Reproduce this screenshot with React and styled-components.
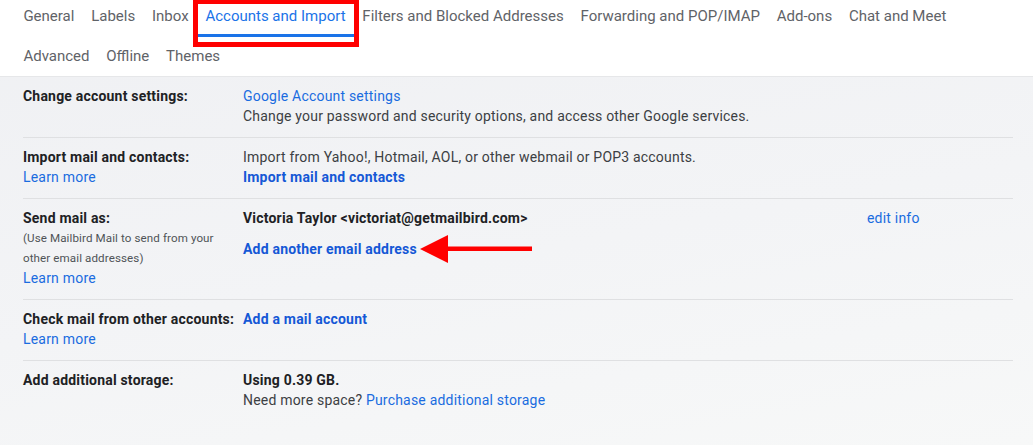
import React from "react";
import styled, { createGlobalStyle } from "styled-components";

const tabs = [
  "General",
  "Labels",
  "Inbox",
  "Accounts and Import",
  "Filters and Blocked Addresses",
  "Forwarding and POP/IMAP",
  "Add-ons",
  "Chat and Meet",
  "Advanced",
  "Offline",
  "Themes",
];

function App() {
  return (
    <>
      <GlobalStyle />
      <Page>
        <TabBar>
          {tabs.map((tab) => (
            <Tab key={tab} $active={tab === "Accounts and Import"}>
              {tab}
              {tab === "Accounts and Import" && <Highlight />}
            </Tab>
          ))}
        </TabBar>

        <Settings>
          <Row>
            <Label>
              <LabelTitle>Change account settings:</LabelTitle>
            </Label>
            <Value>
              <Link>Google Account settings</Link>
              <Text>
                Change your password and security options, and access other
                Google services.
              </Text>
            </Value>
            <Action />
          </Row>

          <Row>
            <Label>
              <LabelTitle>Import mail and contacts:</LabelTitle>
              <Link>Learn more</Link>
            </Label>
            <Value>
              <Text>
                Import from Yahoo!, Hotmail, AOL, or other webmail or POP3
                accounts.
              </Text>
              <Link $bold>Import mail and contacts</Link>
            </Value>
            <Action />
          </Row>

          <Row>
            <Label>
              <LabelTitle>Send mail as:</LabelTitle>
              <Note>
                (Use Mailbird Mail to send from your
                <br />
                other email addresses)
              </Note>
              <Link>Learn more</Link>
            </Label>
            <Value>
              <Strong>Victoria Taylor &lt;victoriat@getmailbird.com&gt;</Strong>
              <AddLine>
                <Link $bold>Add another email address</Link>
                <Arrow width="112" height="28" viewBox="0 0 112 28">
                  <polygon points="0,14 28,0 28,28" fill="#ff0000" />
                  <rect x="26" y="11.5" width="86" height="4.5" fill="#ff0000" />
                </Arrow>
              </AddLine>
            </Value>
            <Action>
              <Link>edit info</Link>
            </Action>
          </Row>

          <Row>
            <Label>
              <LabelTitle>Check mail from other accounts:</LabelTitle>
              <Link>Learn more</Link>
            </Label>
            <Value>
              <Link $bold>Add a mail account</Link>
            </Value>
            <Action />
          </Row>

          <Row $last>
            <Label>
              <LabelTitle>Add additional storage:</LabelTitle>
            </Label>
            <Value>
              <Strong>Using 0.39 GB.</Strong>
              <Text>
                Need more space? <Link as="span">Purchase additional storage</Link>
              </Text>
            </Value>
            <Action />
          </Row>
        </Settings>
      </Page>
    </>
  );
}

export default App;

const GlobalStyle = createGlobalStyle`
  html, body {
    margin: 0;
    padding: 0;
  }
  body {
    font-family: Roboto, "Liberation Sans", Arial, sans-serif;
    background: #f2f3f5;
  }
`;

const Page = styled.div`
  width: 1033px;
  height: 445px;
  overflow: hidden;
  background: linear-gradient(170deg, #eff0f3 0%, #f3f4f6 55%, #f7f8f8 100%);
`;

const TabBar = styled.div`
  display: flex;
  flex-wrap: wrap;
  row-gap: 3px;
  height: 77px;
  box-sizing: border-box;
  padding: 0 70px 0 15px;
  background: #ffffff;
  border-bottom: 1px solid #e6e7e9;
`;

const Tab = styled.div`
  position: relative;
  height: 37px;
  box-sizing: border-box;
  padding: 6px 8.4px 0;
  font-size: 15px;
  line-height: 20px;
  color: ${(p) => (p.$active ? "#1a73e8" : "#5f6368")};
  white-space: nowrap;
  border-bottom: 3px solid ${(p) => (p.$active ? "#1a73e8" : "transparent")};
`;

const Highlight = styled.span`
  position: absolute;
  left: -4px;
  right: -5px;
  top: -1px;
  height: 48px;
  box-sizing: border-box;
  border: 5px solid #ff0000;
  pointer-events: none;
`;

const Settings = styled.div`
  margin: 0 20px 0 23px;
`;

const Row = styled.div`
  display: grid;
  grid-template-columns: 220px 1fr 146px;
  padding: 9px 0 11px;
  border-bottom: ${(p) => (p.$last ? "none" : "1px solid #dfe0e2")};
  font-size: 14px;
  line-height: 20px;
  letter-spacing: 0.2px;
`;

const Label = styled.div`
  display: flex;
  flex-direction: column;
  align-items: flex-start;
`;

const LabelTitle = styled.div`
  font-weight: 700;
  color: #202124;
  white-space: nowrap;
`;

const Note = styled.div`
  font-size: 11.6px;
  line-height: 20px;
  letter-spacing: 0.1px;
  color: #4f5357;
`;

const Value = styled.div`
  display: flex;
  flex-direction: column;
  align-items: flex-start;
`;

const Action = styled.div``;

const Text = styled.div`
  color: #3c4043;
`;

const Strong = styled.div`
  font-weight: 700;
  color: #202124;
`;

const Link = styled.a`
  color: ${(p) => (p.$bold ? "#1558d6" : "#1a6ce0")};
  font-weight: ${(p) => (p.$bold ? 700 : 400)};
  text-decoration: none;
  cursor: pointer;
`;

const AddLine = styled.div`
  display: flex;
  align-items: center;
  height: 20px;
  margin-top: 11px;
`;

const Arrow = styled.svg`
  display: block;
  margin: -4px 0 -4px 3px;
  flex-shrink: 0;
`;
